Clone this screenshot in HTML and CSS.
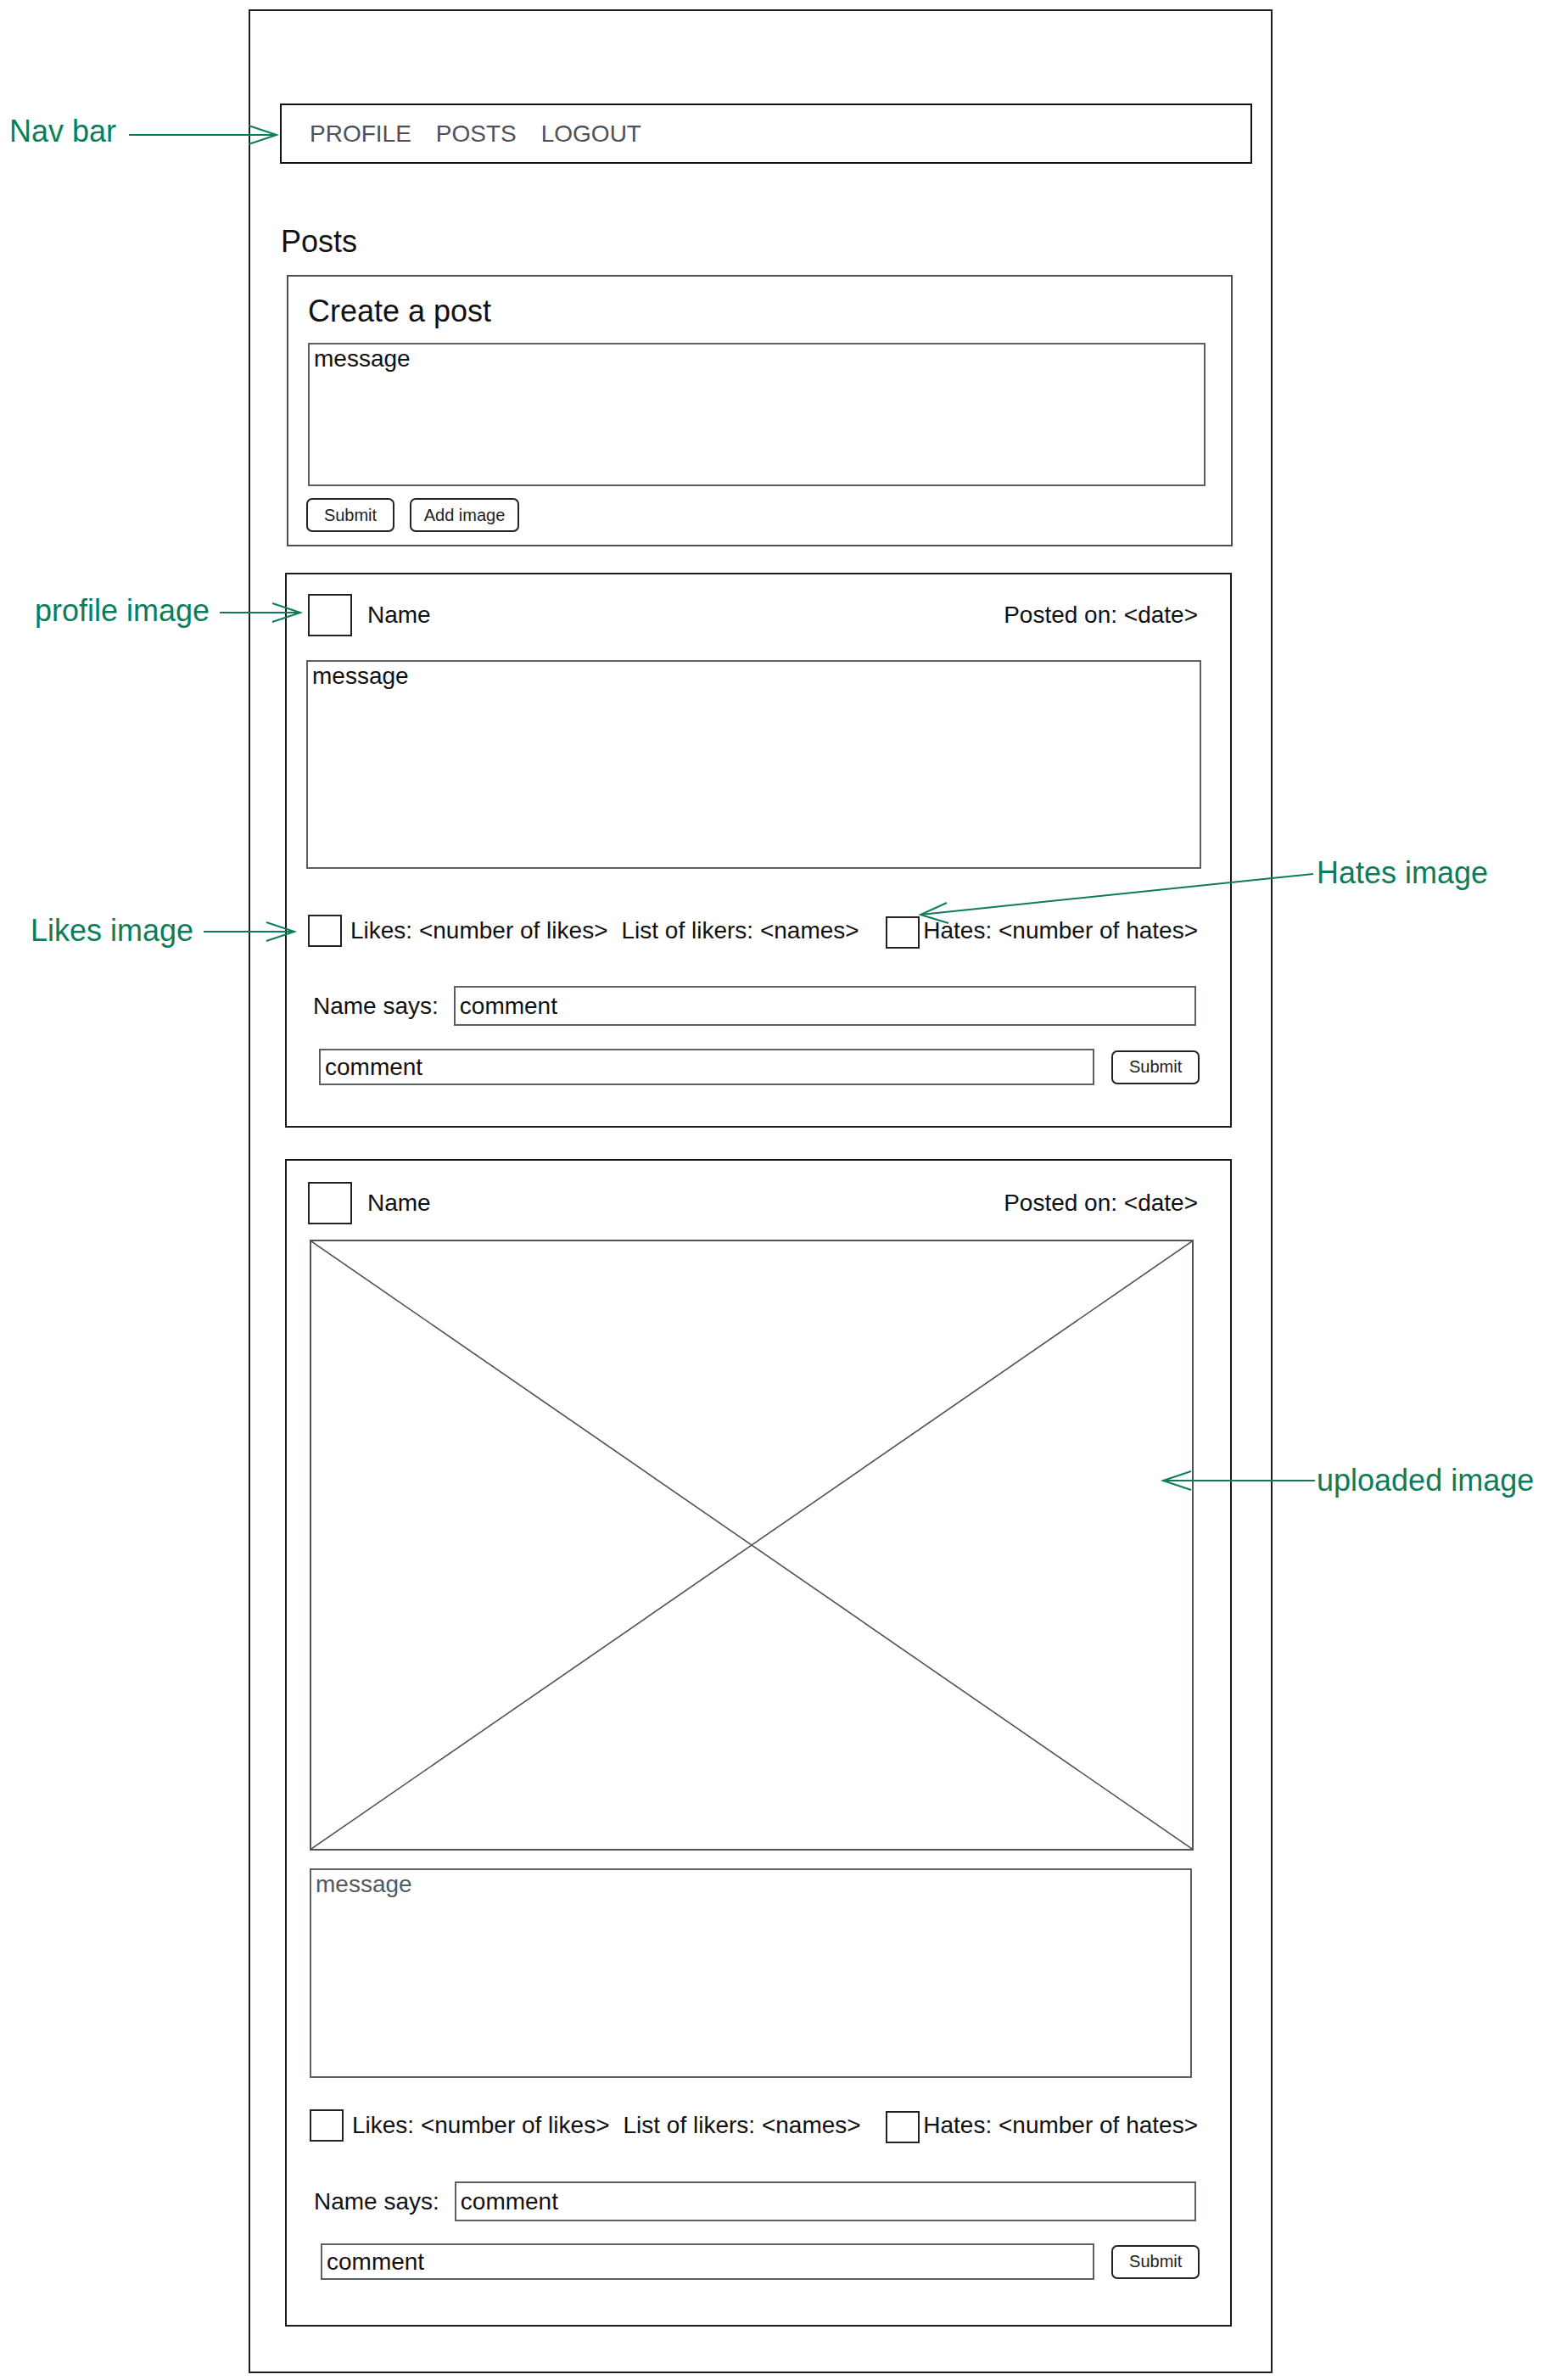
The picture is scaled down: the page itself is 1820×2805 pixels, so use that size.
FILE: index.html
```html
<!DOCTYPE html>
<html lang="en">
<head>
<meta charset="utf-8">
<title>Posts wireframe</title>
<link rel="stylesheet" href="styles.css">
</head>
<body>
<div class="page">
  <div class="frame">
    <nav class="navbar">
      <span>PROFILE</span><span>POSTS</span><span>LOGOUT</span>
    </nav>
    <h1 class="page-title">Posts</h1>

    <section class="create-card">
      <h2 class="create-title">Create a post</h2>
      <div class="textbox create-msg">message</div>
      <div class="btn-row">
        <button class="btn btn-submit">Submit</button>
        <button class="btn btn-add">Add image</button>
      </div>
    </section>

    <article class="post post-text">
      <header class="post-head">
        <div class="avatar"></div>
        <span class="name">Name</span>
        <span class="date">Posted on: &lt;date&gt;</span>
      </header>
      <div class="textbox msg">message</div>
      <div class="reactions">
        <div class="checkbox"></div>
        <span class="likes">Likes: &lt;number of likes&gt;</span>
        <span class="likers">List of likers: &lt;names&gt;</span>
        <div class="hates-group">
          <div class="checkbox"></div>
          <span class="hates">Hates: &lt;number of hates&gt;</span>
        </div>
      </div>
      <div class="says-row">
        <span class="says-label">Name says:</span>
        <div class="textbox says">comment</div>
      </div>
      <div class="comment-row">
        <div class="textbox comment">comment</div>
        <button class="btn btn-submit">Submit</button>
      </div>
    </article>

    <article class="post post-image">
      <header class="post-head">
        <div class="avatar"></div>
        <span class="name">Name</span>
        <span class="date">Posted on: &lt;date&gt;</span>
      </header>
      <div class="image-ph">
        <svg class="image-x" viewBox="0 0 100 100" preserveAspectRatio="none">
          <line x1="0" y1="0" x2="100" y2="100"/>
          <line x1="100" y1="0" x2="0" y2="100"/>
        </svg>
      </div>
      <div class="textbox msg msg-muted">message</div>
      <div class="reactions">
        <div class="checkbox"></div>
        <span class="likes">Likes: &lt;number of likes&gt;</span>
        <span class="likers">List of likers: &lt;names&gt;</span>
        <div class="hates-group">
          <div class="checkbox"></div>
          <span class="hates">Hates: &lt;number of hates&gt;</span>
        </div>
      </div>
      <div class="says-row">
        <span class="says-label">Name says:</span>
        <div class="textbox says">comment</div>
      </div>
      <div class="comment-row">
        <div class="textbox comment">comment</div>
        <button class="btn btn-submit">Submit</button>
      </div>
    </article>
  </div>

  <span class="note note-nav">Nav bar</span>
  <span class="note note-profile">profile image</span>
  <span class="note note-likes">Likes image</span>
  <span class="note note-hates">Hates image</span>
  <span class="note note-upload">uploaded image</span>

  <svg class="arrows" width="1820" height="2805" viewBox="0 0 1820 2805">
    <line x1="152" y1="159" x2="326" y2="159"/>
    <polyline points="293,148 326,159 293,170"/>
    <line x1="259" y1="722" x2="354" y2="722"/>
    <polyline points="321,711 354,722 321,733"/>
    <line x1="240" y1="1098" x2="347" y2="1098"/>
    <polyline points="314,1087 347,1098 314,1109"/>
    <line x1="1548" y1="1030" x2="1085" y2="1078"/>
    <polyline points="1116,1064 1085,1078 1118,1088"/>
    <line x1="1550" y1="1745" x2="1371" y2="1745"/>
    <polyline points="1404,1734 1371,1745 1404,1756"/>
  </svg>
</div>
</body>
</html>
```

FILE: styles.css
```css
* { box-sizing: border-box; }

body {
  margin: 0;
  background: #ffffff;
  font-family: "Liberation Sans", Arial, sans-serif;
  color: #111111;
}

.page {
  position: relative;
  width: 1820px;
  height: 2805px;
  padding-top: 11px;
  overflow: hidden;
}

.frame {
  margin-left: 293px;
  width: 1207px;
  height: 2786px;
  border: 2px solid #1e1e1e;
}

/* nav */
.navbar {
  margin: 109px 0 0 35px;
  width: 1146px;
  height: 71px;
  border: 2px solid #111111;
  padding-left: 33px;
  display: flex;
  align-items: center;
  gap: 29px;
  font-size: 28px;
  color: #4d5259;
}

.page-title {
  margin: 70px 0 0 36px;
  font-size: 36px;
  line-height: 44px;
  font-weight: normal;
}

/* create card */
.create-card {
  margin: 17px 0 0 43px;
  width: 1115px;
  height: 320px;
  border: 2px solid #4a4f56;
  padding: 19px 0 0 23px;
}

.create-title {
  margin: 0;
  font-size: 36px;
  line-height: 44px;
  font-weight: normal;
}

.textbox {
  border: 2px solid #5b6067;
  font-size: 28px;
  line-height: 33px;
  padding: 0 5px;
  color: #111111;
  background: #ffffff;
}

.create-msg {
  margin-top: 15px;
  width: 1058px;
  height: 169px;
}

.btn-row {
  margin: 14px 0 0 -2px;
  display: flex;
  gap: 18px;
}

.btn {
  height: 40px;
  border: 2px solid #222222;
  border-radius: 7px;
  background: #ffffff;
  font-family: "Liberation Sans", Arial, sans-serif;
  font-size: 20px;
  color: #222222;
  padding: 0;
}

.btn-submit { width: 104px; }
.btn-add { width: 129px; }

/* posts */
.post {
  margin: 31px 0 0 41px;
  width: 1116px;
  border: 2px solid #1a1a1a;
  padding: 23px 36px 48px 25px;
  font-size: 28px;
}

.post-image {
  margin-top: 37px;
  padding-top: 25px;
  padding-bottom: 53px;
}

.post-head {
  display: flex;
  align-items: center;
  height: 50px;
}

.avatar {
  width: 52px;
  height: 50px;
  border: 2px solid #222222;
}

.name { margin-left: 18px; }

.date {
  margin-left: auto;
  margin-right: 2px;
}

.msg {
  margin: 28px 0 0 -2px;
  width: 1055px;
  height: 246px;
}

.post-image .msg {
  margin: 21px 0 0 2px;
  width: 1040px;
  height: 247px;
}

.msg-muted { color: #55595f; }

.image-ph {
  margin: 18px 0 0 2px;
  width: 1042px;
  height: 720px;
  border: 2px solid #4f545b;
}

.image-x {
  display: block;
  width: 100%;
  height: 100%;
}

.image-x line {
  stroke: #4f545b;
  stroke-width: 1.6;
  vector-effect: non-scaling-stroke;
}

.reactions {
  margin-top: 53px;
  display: flex;
  align-items: center;
  height: 40px;
}

.post-image .reactions {
  margin-top: 36px;
  padding-left: 2px;
}

.checkbox {
  width: 40px;
  height: 38px;
  border: 2px solid #222222;
  flex: none;
}

.likes { margin-left: 10px; }
.likers { margin-left: 16px; }

.hates-group {
  margin-left: auto;
  margin-right: 2px;
  display: flex;
  align-items: center;
}

.hates-group .checkbox { margin-top: 3px; }

.hates { margin-left: 4px; }

.says-row {
  margin-top: 45px;
  display: flex;
  align-items: center;
  padding-left: 6px;
}

.post-image .says-row {
  margin-top: 46px;
  padding-left: 7px;
}

.says-label { flex: none; }

.says {
  margin: 0 4px 0 18px;
  flex: 1;
  height: 47px;
  display: flex;
  align-items: center;
}

.comment-row {
  margin-top: 27px;
  display: flex;
  align-items: center;
  padding-left: 13px;
}

.post-image .comment-row {
  margin-top: 26px;
  padding-left: 15px;
}

.comment {
  width: 916px;
  height: 43px;
  display: flex;
  align-items: center;
}

.comment-row .btn { margin-left: 20px; }

/* annotations */
.note {
  position: absolute;
  font-size: 36px;
  line-height: 40px;
  color: #0b7d5b;
  white-space: nowrap;
}

.note-nav { left: 11px; top: 135px; }
.note-profile { left: 41px; top: 700px; }
.note-likes { left: 36px; top: 1077px; }
.note-hates { left: 1552px; top: 1009px; }
.note-upload { left: 1552px; top: 1725px; }

.arrows {
  position: absolute;
  left: 0;
  top: 0;
  pointer-events: none;
}

.arrows line,
.arrows polyline {
  stroke: #0b7d5b;
  stroke-width: 2;
  fill: none;
}
```
